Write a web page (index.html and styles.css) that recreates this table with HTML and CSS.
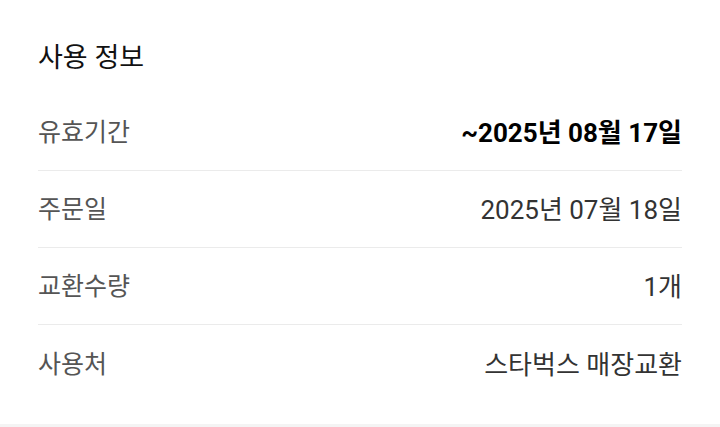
FILE: index.html
```html
<!DOCTYPE html>
<html lang="ko">
<head>
<meta charset="utf-8">
<link rel="stylesheet" href="styles.css">
</head>
<body>
<section class="card">
  <h2 class="title">사용 정보</h2>
  <div class="rows">
    <div class="row">
      <span class="label">유효기간</span>
      <span class="value strong">~2025년 08월 17일</span>
    </div>
    <div class="row">
      <span class="label">주문일</span>
      <span class="value">2025년 07월 18일</span>
    </div>
    <div class="row">
      <span class="label">교환수량</span>
      <span class="value">1개</span>
    </div>
    <div class="row">
      <span class="label">사용처</span>
      <span class="value">스타벅스 매장교환</span>
    </div>
  </div>
</section>
<div class="band"></div>
</body>
</html>
```
FILE: styles.css
```css
html, body {
  margin: 0;
  padding: 0;
  background: #fff;
}
body {
  font-family: Roboto, "Noto Sans CJK KR", sans-serif;
  width: 720px;
  height: 427px;
  overflow: hidden;
  display: flex;
  flex-direction: column;
}
.card {
  padding: 40px 38px 0 38px;
  height: 384px;
}
.title {
  margin: 0 0 18px 0;
  font-size: 27px;
  line-height: 36px;
  font-weight: 400;
  color: #111;
}
.rows {
  display: flex;
  flex-direction: column;
}
.row {
  display: flex;
  justify-content: space-between;
  align-items: center;
  box-sizing: border-box;
  height: 77px;
  padding-top: 2px;
  line-height: 36px;
  border-bottom: 1px solid #ebebeb;
}
.row:last-child {
  border-bottom: none;
}
.label {
  font-size: 25px;
  color: #555;
}
.value {
  font-size: 26px;
  color: #333;
}
.value.strong {
  font-weight: 700;
  color: #000;
}
.band {
  flex: 1;
  background: #f4f4f4;
}
```
